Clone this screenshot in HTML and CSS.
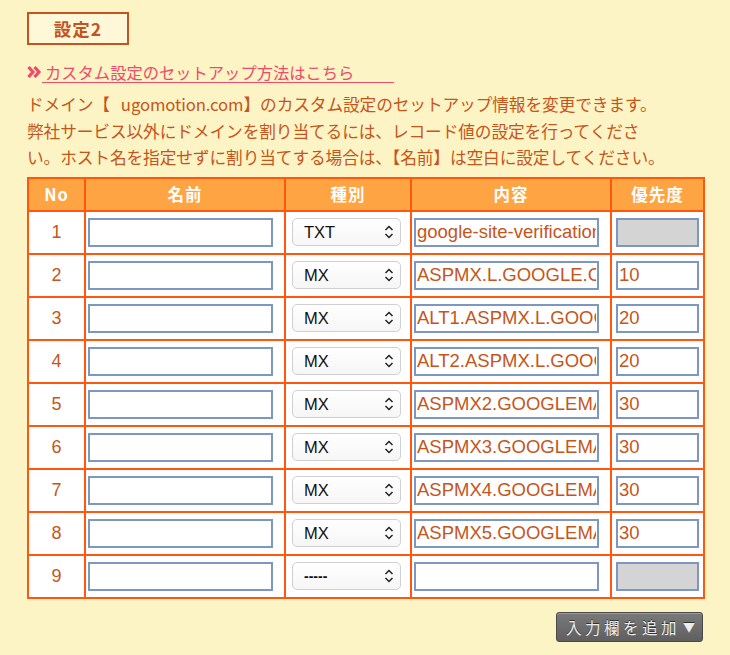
FILE: index.html
```html
<!DOCTYPE html>
<html lang="ja">
<head>
<meta charset="utf-8">
<link rel="stylesheet" href="styles.css">
</head>
<body>
<div class="page">
  <div class="tab">設定2</div>
  <div class="linkrow"><svg class="chev" width="15" height="14" viewBox="0 0 15 14"><path d="M1.5 2 L6 7 L1.5 12 M7.5 2 L12 7 L7.5 12" fill="none" stroke="#ee4b68" stroke-width="3.2"/></svg><a class="help" href="#">カスタム設定のセットアップ方法はこちら</a></div>
  <p class="desc">ドメイン【&nbsp;&nbsp;&nbsp;ugomotion.com】のカスタム設定のセットアップ情報を変更できます。<br>弊社サービス以外にドメインを割り当てるには、レコード値の設定を行ってくださ<br>い。ホスト名を指定せずに割り当てする場合は、【名前】は空白に設定してください。</p>
  <table class="records">
    <colgroup><col class="c1"><col class="c2"><col class="c3"><col class="c4"><col class="c5"></colgroup>
    <thead>
      <tr><th>No</th><th>名前</th><th>種別</th><th>内容</th><th>優先度</th></tr>
    </thead>
    <tbody>
      <tr><td class="no">1</td><td><input class="txt name" type="text"></td><td><div class="sel"><span>TXT</span><svg width="10" height="16" viewBox="0 0 10 16"><path d="M1.5 6 L5 2.5 L8.5 6 M1.5 10 L5 13.5 L8.5 10" fill="none" stroke="#222" stroke-width="1.5"/></svg></div></td><td><input class="txt val" type="text" value="google-site-verification=abc"></td><td><input class="txt pri off" type="text" disabled></td></tr>
      <tr><td class="no">2</td><td><input class="txt name" type="text"></td><td><div class="sel"><span>MX</span><svg width="10" height="16" viewBox="0 0 10 16"><path d="M1.5 6 L5 2.5 L8.5 6 M1.5 10 L5 13.5 L8.5 10" fill="none" stroke="#222" stroke-width="1.5"/></svg></div></td><td><input class="txt val" type="text" value="ASPMX.L.GOOGLE.COM"></td><td><input class="txt pri" type="text" value="10"></td></tr>
      <tr><td class="no">3</td><td><input class="txt name" type="text"></td><td><div class="sel"><span>MX</span><svg width="10" height="16" viewBox="0 0 10 16"><path d="M1.5 6 L5 2.5 L8.5 6 M1.5 10 L5 13.5 L8.5 10" fill="none" stroke="#222" stroke-width="1.5"/></svg></div></td><td><input class="txt val" type="text" value="ALT1.ASPMX.L.GOOGLE.COM"></td><td><input class="txt pri" type="text" value="20"></td></tr>
      <tr><td class="no">4</td><td><input class="txt name" type="text"></td><td><div class="sel"><span>MX</span><svg width="10" height="16" viewBox="0 0 10 16"><path d="M1.5 6 L5 2.5 L8.5 6 M1.5 10 L5 13.5 L8.5 10" fill="none" stroke="#222" stroke-width="1.5"/></svg></div></td><td><input class="txt val" type="text" value="ALT2.ASPMX.L.GOOGLE.COM"></td><td><input class="txt pri" type="text" value="20"></td></tr>
      <tr><td class="no">5</td><td><input class="txt name" type="text"></td><td><div class="sel"><span>MX</span><svg width="10" height="16" viewBox="0 0 10 16"><path d="M1.5 6 L5 2.5 L8.5 6 M1.5 10 L5 13.5 L8.5 10" fill="none" stroke="#222" stroke-width="1.5"/></svg></div></td><td><input class="txt val" type="text" value="ASPMX2.GOOGLEMAIL.COM"></td><td><input class="txt pri" type="text" value="30"></td></tr>
      <tr><td class="no">6</td><td><input class="txt name" type="text"></td><td><div class="sel"><span>MX</span><svg width="10" height="16" viewBox="0 0 10 16"><path d="M1.5 6 L5 2.5 L8.5 6 M1.5 10 L5 13.5 L8.5 10" fill="none" stroke="#222" stroke-width="1.5"/></svg></div></td><td><input class="txt val" type="text" value="ASPMX3.GOOGLEMAIL.COM"></td><td><input class="txt pri" type="text" value="30"></td></tr>
      <tr><td class="no">7</td><td><input class="txt name" type="text"></td><td><div class="sel"><span>MX</span><svg width="10" height="16" viewBox="0 0 10 16"><path d="M1.5 6 L5 2.5 L8.5 6 M1.5 10 L5 13.5 L8.5 10" fill="none" stroke="#222" stroke-width="1.5"/></svg></div></td><td><input class="txt val" type="text" value="ASPMX4.GOOGLEMAIL.COM"></td><td><input class="txt pri" type="text" value="30"></td></tr>
      <tr><td class="no">8</td><td><input class="txt name" type="text"></td><td><div class="sel"><span>MX</span><svg width="10" height="16" viewBox="0 0 10 16"><path d="M1.5 6 L5 2.5 L8.5 6 M1.5 10 L5 13.5 L8.5 10" fill="none" stroke="#222" stroke-width="1.5"/></svg></div></td><td><input class="txt val" type="text" value="ASPMX5.GOOGLEMAIL.COM"></td><td><input class="txt pri" type="text" value="30"></td></tr>
      <tr><td class="no">9</td><td><input class="txt name" type="text"></td><td><div class="sel"><span class="dash">-----</span><svg width="10" height="16" viewBox="0 0 10 16"><path d="M1.5 6 L5 2.5 L8.5 6 M1.5 10 L5 13.5 L8.5 10" fill="none" stroke="#222" stroke-width="1.5"/></svg></div></td><td><input class="txt val" type="text"></td><td><input class="txt pri off" type="text" disabled></td></tr>
    </tbody>
  </table>
  <div class="actions"><button class="add" type="button">入力欄を追加<span class="tri">▼</span></button></div>
</div>
</body>
</html>
```
FILE: styles.css
```css
html, body {
  margin: 0;
  padding: 0;
  background: #fdf4c6;
}
body {
  font-family: "Noto Sans CJK JP", "Liberation Sans", sans-serif;
  color: #c5561b;
}
.page {
  padding: 12px 0 0 27px;
  width: 676px;
}
.tab {
  width: 98px;
  height: 29px;
  border: 2px solid #c4541f;
  background: #fff8d8;
  color: #c4541f;
  font-weight: bold;
  font-size: 17.5px;
  line-height: 29px;
  text-align: center;
  letter-spacing: 1px;
}
.linkrow {
  margin-top: 16px;
  display: flex;
  align-items: flex-end;
  height: 22px;
}
.chev {
  margin-bottom: 4px;
  flex: none;
}
.help {
  display: inline-block;
  color: #ee4b68;
  font-size: 16.3px;
  line-height: 20px;
  padding: 0 40px 0 3px;
  text-decoration: none;
  border-bottom: 1px solid #ee4b68;
}
.desc {
  margin: 8px 0 0 0;
  font-size: 16.7px;
  line-height: 26.5px;
  white-space: nowrap;
  letter-spacing: -0.1px;
}
.records {
  margin-top: 6px;
  border-collapse: collapse;
  table-layout: fixed;
  width: 676px;
  border: 2px solid #ff570d;
}
.c1 { width: 57px; }
.c2 { width: 200px; }
.c3 { width: 126px; }
.c4 { width: 200px; }
.c5 { width: 93px; }
.records th {
  background: #ffa443;
  color: #fff;
  font-weight: bold;
  font-size: 16.5px;
  height: 31px;
  padding: 0;
  border: 2px solid #ff570d;
  letter-spacing: 1px;
}
.records td {
  background: #fff;
  height: 41px;
  padding: 0 0 0 2px;
  border: 2px solid #ff570d;
  vertical-align: middle;
}
.records td.no {
  text-align: center;
  padding: 0;
  font-family: "Liberation Sans", sans-serif;
  font-size: 18px;
  color: #c5561b;
}
.txt {
  box-sizing: border-box;
  display: block;
  height: 29px;
  border: 2px solid #7d97c3;
  background: #fff;
  font-family: "Liberation Sans", sans-serif;
  font-size: 18.5px;
  color: #c5561b;
  padding: 0 1px;
  margin: 0;
  outline: none;
}
.name { width: 185px; }
.val { width: 185px; }
.pri { width: 83px; margin-left: 2px; }
.off { background: #d4d4d4; }
.sel {
  box-sizing: border-box;
  margin-left: 4px;
  width: 109px;
  height: 28px;
  border: 1px solid #d0d0d0;
  border-radius: 5px;
  background: linear-gradient(#ffffff, #f6f6f6);
  display: flex;
  align-items: center;
  justify-content: space-between;
  padding: 0 6px 0 11px;
  font-family: "Liberation Sans", sans-serif;
  font-size: 16.5px;
  color: #111;
}
.sel .dash {
  font-weight: bold;
  font-size: 14px;
}
.actions {
  display: flex;
  justify-content: flex-end;
  margin-top: 13px;
}
.add {
  box-sizing: border-box;
  width: 147px;
  height: 30px;
  border: 1px solid #4a4a4a;
  border-radius: 3px;
  background: linear-gradient(#7a7a7a, #5f5f5f);
  box-shadow: inset 0 1px 0 #9a9a9a;
  color: #ececec;
  font-family: "Noto Sans CJK JP", sans-serif;
  font-size: 15.5px;
  letter-spacing: 3.5px;
  padding: 0 0 0 9px;
  display: flex;
  align-items: center;
  text-shadow: 0 -1px 0 #333;
}
.tri {
  font-size: 12px;
  letter-spacing: 0;
  margin-left: 3px;
}
```
